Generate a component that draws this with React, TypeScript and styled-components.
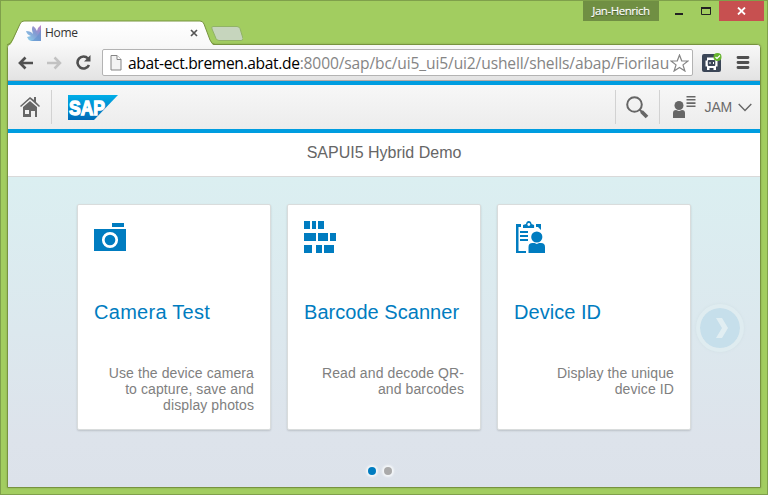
import React from "react";
import styled, { createGlobalStyle } from "styled-components";

const Global = createGlobalStyle`
  * { box-sizing: border-box; }
  html, body { margin: 0; padding: 0; overflow: hidden; }
  svg { display: block; flex: none; }
`;

const Window = styled.div`
  width: 768px;
  height: 495px;
  display: flex;
  flex-direction: column;
  background: #a2cd60;
  border: 1px solid #7fa04b;
  padding: 0 6px 6px 6px;
  font-family: "Liberation Sans", Arial, sans-serif;
`;

const Caption = styled.div`
  height: 19px;
  flex: none;
  display: flex;
  justify-content: flex-end;
  margin-right: -3px;
`;

const Profile = styled.div`
  width: 76px;
  height: 20px;
  background: #708f43;
  color: #fff;
  font: 11.5px/20px "Open Sans", sans-serif;
  letter-spacing: -0.45px;
  text-align: center;
  text-shadow: 0 1px 1px #3f5225, 0 0 1px #dde8cc;
`;

const CaptionButton = styled.div<{ $width: number; $inset?: number; $danger?: boolean }>`
  width: ${(p) => p.$width}px;
  height: 20px;
  padding-right: ${(p) => p.$inset ?? 0}px;
  display: flex;
  align-items: center;
  justify-content: center;
  background: ${(p) => (p.$danger ? "#c75050" : "transparent")};
`;

const TabStrip = styled.div`
  height: 24px;
  flex: none;
  display: flex;
  align-items: flex-start;
  position: relative;
  z-index: 1;
`;

const Tab = styled.div`
  position: relative;
  width: 208px;
  height: 26px;
  display: flex;
  align-items: center;
  padding: 0 17px 0 19px;
`;

const TabShape = styled.svg`
  position: absolute;
  left: 0;
  top: 0;
`;

const TabTitle = styled.span`
  position: relative;
  flex: 1;
  margin-left: 4px;
  color: #333;
  font: 12px/18px "Open Sans", sans-serif;
  letter-spacing: -0.3px;
`;

const Raised = styled.div`
  position: relative;
`;

const NewTab = styled.div`
  width: 30px;
  height: 15px;
  margin: 6px 0 0 -4px;
`;

const Browser = styled.div`
  flex: 1;
  min-height: 0;
  display: flex;
  flex-direction: column;
  border: 1px solid #77933f;
  border-radius: 4px 4px 0 0;
  background: #fff;
  overflow: hidden;
  box-shadow: 0 0 2px #819f4d;
`;

const Toolbar = styled.div`
  height: 36px;
  flex: none;
  display: flex;
  align-items: center;
  padding: 0 9px 0 10px;
  background: linear-gradient(#f8f8f8, #e3e3e3);
  border-bottom: 1px solid #b3aca8;
`;

const NavButton = styled.div<{ $gap: number }>`
  margin-right: ${(p) => p.$gap}px;
`;

const AddressBar = styled.div`
  width: 591px;
  height: 27px;
  display: flex;
  align-items: center;
  padding: 0 3px 0 7px;
  background: #fff;
  border: 1px solid #b3b3b3;
  border-radius: 2px;
`;

const Url = styled.div`
  flex: 1;
  min-width: 0;
  margin-left: 6px;
  white-space: nowrap;
  color: #858585;
  font: 15.6px/24px "Open Sans", sans-serif;
  letter-spacing: -0.14px;
`;

const Host = styled.span`
  color: #000;
  letter-spacing: -0.35px;
`;

const Extension = styled.div`
  margin: 0 14px 0 9px;
`;

const ShellHeader = styled.header`
  height: 52px;
  flex: none;
  display: flex;
  align-items: center;
  padding: 0 8px 0 12px;
  background: linear-gradient(#f7f7f7, #ececec);
  border-top: 4px solid #009de0;
  border-bottom: 4px solid #009de0;
`;

const Divider = styled.div<{ $left: number; $right: number }>`
  width: 1px;
  height: 34px;
  background: #d2d2d2;
  margin: 0 ${(p) => p.$right}px 0 ${(p) => p.$left}px;
`;

const Spacer = styled.div`
  flex: 1;
`;

const UserName = styled.span`
  margin: 0 6px 0 9px;
  color: #6b6b6b;
  font-size: 14px;
  line-height: 16px;
  letter-spacing: -0.2px;
`;

const TitleBar = styled.h1`
  height: 44px;
  flex: none;
  margin: 0;
  background: #fff;
  border-bottom: 1px solid #d9d9d9;
  color: #666;
  font-size: 16px;
  font-weight: normal;
  line-height: 40px;
  text-align: center;
`;

const Launchpad = styled.main`
  position: relative;
  flex: 1;
  display: flex;
  flex-direction: column;
  align-items: center;
  padding-top: 27px;
  background: linear-gradient(#dbeff1 0%, #dce8ee 50%, #dde3eb 85%, #dce2ea 100%);
`;

const Tiles = styled.div`
  display: flex;
  gap: 16px;
`;

const TileCard = styled.article`
  width: 194px;
  height: 226px;
  display: flex;
  flex-direction: column;
  padding: 16px;
  background: #fff;
  border: 1px solid #d9dcdc;
  border-radius: 2px;
  box-shadow: 0 1px 2px rgba(0, 0, 0, 0.15);
`;

const TileTitle = styled.h2<{ $tracking: number }>`
  margin: 47px 0 0;
  color: #007cc0;
  font-size: 20px;
  font-weight: normal;
  line-height: 24px;
  letter-spacing: ${(p) => p.$tracking}px;
  white-space: nowrap;
`;

const TileText = styled.p`
  margin: 41px 0 0;
  align-self: flex-end;
  width: 155px;
  color: #808080;
  font-size: 14px;
  line-height: 16px;
  letter-spacing: 0.1px;
  text-align: right;
  white-space: pre-line;
`;

const Pager = styled.div`
  display: flex;
  gap: 8px;
  margin: 37px 8px 0 0;
`;

const Dot = styled.div<{ $active?: boolean }>`
  width: 8px;
  height: 8px;
  border-radius: 50%;
  background: ${(p) => (p.$active ? "#007cc0" : "#aaa")};
  box-shadow: 0 0 2px 2px #f4f7f9;
`;

const NextPage = styled.button`
  position: absolute;
  right: 16px;
  top: 127px;
  width: 48px;
  height: 48px;
  padding: 0 0 0 4px;
  display: flex;
  align-items: center;
  justify-content: center;
  border: 4px solid #dfecf0;
  border-radius: 50%;
  background: #c6dfeb;
  background-clip: padding-box;
  box-shadow: 0 0 3px #d1dfe5;
`;

const CameraIcon = () => (
  <svg width="32" height="32" fill="#007cc0">
    <path d="M18 2h12v4H18zM0 8h32v22H0z" />
    <circle cx="16" cy="19" r="6.7" fill="none" stroke="#fff" strokeWidth="2.7" />
  </svg>
);

const BarcodeIcon = () => (
  <svg width="33" height="32" fill="#007cc0">
    <path d="M0 0h6v8H0zM8 0h4v8H8zM14 0h6v8h-6zM0 12h12v8H0zM14 12h10v8H14zM26 12h6v8h-6zM0 24h8v8H0zM12 24h6v8h-6zM20 24h10v8H20z" />
  </svg>
);

const DeviceIcon = () => (
  <svg width="32" height="32" fill="#007cc0">
    <path d="M2 3h5v3H4.500v24H12v2H2zM22 3h5v6l-3-3h-2z" />
    <path d="M9 7V4l3-1q.5-3 2.800-3t2.800 3l2.500 1v3z" />
    <circle cx="14.800" cy="3.500" r="1.400" fill="#fff" />
    <path d="M6 10h8v2H6zM6 14h8v2H6zM6 18h8v2H6z" />
    <circle cx="22.800" cy="16" r="5.600" />
    <path d="M14.500 32v-6q0-4 4-4h2l2.300 1 2.300-1h1.900q4 0 4 4v6z" />
  </svg>
);

const tiles = [
  { title: "Camera Test", tracking: 0.28, text: "Use the device camera\nto capture, save and\ndisplay photos", icon: <CameraIcon /> },
  { title: "Barcode Scanner", tracking: 0.04, text: "Read and decode QR-\nand barcodes", icon: <BarcodeIcon /> },
  { title: "Device ID", tracking: 0.04, text: "Display the unique\ndevice ID", icon: <DeviceIcon /> },
];

const TitleBarArea = () => (
  <Caption>
    <Profile>Jan-Henrich</Profile>
    <CaptionButton $width={40}>
      <svg width="8" height="10"><path d="M0 7h8v2H0z" fill="#222" /></svg>
    </CaptionButton>
    <CaptionButton $width={20} $inset={6}>
      <svg width="10" height="10"><path d="M.5 1.500h9v7h-9z" fill="none" stroke="#222" /><path d="M0 1h10v2H0z" fill="#222" /></svg>
    </CaptionButton>
    <CaptionButton $width={45} $danger>
      <svg width="9" height="8"><path d="M1 .5l7 7M8 .5l-7 7" stroke="#fff" strokeWidth="1.800" /></svg>
    </CaptionButton>
  </Caption>
);

const Tabs = () => (
  <TabStrip>
    <Tab>
      <TabShape width="210" height="26">
        <defs>
          <linearGradient id="tab" x1="0" y1="0" x2="0" y2="1">
            <stop offset="0" stopColor="#fff" />
            <stop offset="1" stopColor="#f8f8f8" />
          </linearGradient>
        </defs>
        <path d="M1 26q3-1 5-6L13 4q1-3 4-3h176q3 0 4 3l6 16q2 5 4 5v1z" fill="url(#tab)" />
        <path d="M0 25q4-1 6-6L13 4q1-3 4-3h176q3 0 4 3l6 16q2 4.500 5 4.500" fill="none" stroke="#77933f" />
      </TabShape>
      <Raised>
        <svg width="15" height="16">
          <defs>
            <linearGradient id="petals" x1="0" x2="1" y1="1" y2="0">
              <stop offset="0" stopColor="#8fd6ee" />
              <stop offset=".55" stopColor="#829bd2" />
              <stop offset="1" stopColor="#c47fc6" />
            </linearGradient>
          </defs>
          <path d="M0 6q5 0 7 3Q5 3 7 1q3 2 4 5 1-4 4-6v16H5Q2 15 1 12l4-1Q1 10 0 6z" fill="url(#petals)" />
          <path d="M5 16q6-2 10-12v12z" fill="#6292ce" opacity=".6" />
        </svg>
      </Raised>
      <TabTitle>Home</TabTitle>
      <Raised>
        <svg width="8" height="8"><path d="M1 1l6 6M7 1L1 7" stroke="#555" strokeWidth="1.700" /></svg>
      </Raised>
    </Tab>
    <NewTab>
      <svg width="32" height="16">
        <path d="M2 .5h24q2 0 3 2l3 10q0 2-2 2H8q-2 0-3-2L1 3Q0 .5 2 .5z" fill="#c6d5bd" stroke="#91b366" />
      </svg>
    </NewTab>
  </TabStrip>
);

const BrowserToolbar = () => (
  <Toolbar>
    <NavButton $gap={14}>
      <svg width="15" height="14"><path d="M7.500 1.500L2 7l5.500 5.500M2 7h13" fill="none" stroke="#505050" strokeWidth="2.700" /></svg>
    </NavButton>
    <NavButton $gap={14}>
      <svg width="15" height="14"><path d="M7.500 1.500L13 7l-5.500 5.500M13 7H0" fill="none" stroke="#c2c2c2" strokeWidth="2.500" /></svg>
    </NavButton>
    <NavButton $gap={11}>
      <svg width="15" height="15">
        <path d="M12 3.500A6 6 0 1 0 13 10" fill="none" stroke="#505050" strokeWidth="2.600" />
        <path d="M14.500 0v6.500H8z" fill="#505050" />
      </svg>
    </NavButton>
    <AddressBar>
      <svg width="12" height="16">
        <path d="M1 .5h6l4 4v10.500H1z" fill="#f3f3f3" stroke="#858585" />
        <path d="M7 .5v4h4" fill="#fff" stroke="#858585" />
      </svg>
      <Url><Host>abat-ect.bremen.abat.de</Host>:8000/sap/bc/ui5_ui5/ui2/ushell/shells/abap/Fiorilau</Url>
      <svg width="19" height="18">
        <path d="M9.500 1l2.200 5.800 6.300.2-5 3.900 1.900 6.100-5.400-3.600L4.100 17 6 10.900 1 7l6.300-.2z" fill="#fff" stroke="#858585" strokeWidth="1.200" />
      </svg>
    </AddressBar>
    <Extension>
      <svg width="20" height="20">
        <rect y="1" width="19" height="18" rx="2" fill="#3b4657" />
        <path d="M5 4.500h9v3h1.500v6H14V17h-2.500v-2h-4v2H5v-3.500H3.500v-6H5z" fill="#fff" />
        <rect x="5.800" y="7" width="7.500" height="6" rx="1" fill="#3b4657" />
        <path d="M7.500 9h1v2h-1zM11 9h1v2h-1z" fill="#fff" />
        <circle cx="15.500" cy="4" r="4" fill="#66b52c" />
        <path d="M13.500 4l1.500 1.500 3-3" fill="none" stroke="#fff" strokeWidth="1.200" />
      </svg>
    </Extension>
    <svg width="14" height="13"><path d="M2 1.500h10M2 6.500h10M2 11.500h10" stroke="#505050" strokeWidth="2.800" strokeLinecap="round" /></svg>
  </Toolbar>
);

const Shell = () => (
  <ShellHeader>
    <svg width="20" height="20" fill="#666">
      <path d="M10 0L0 9l1 1 9-8 9 8 1-1-4-4V0h-2v3z" />
      <path fillRule="evenodd" d="M10 4L3 10v10h8v-6h4v6h2V10zM5 13h4v4H5z" />
    </svg>
    <Divider $left={11} $right={16} />
    <svg width="50" height="25">
      <defs>
        <linearGradient id="sap" x1="0" y1="0" x2="0" y2="1">
          <stop offset="0" stopColor="#00aee8" />
          <stop offset="1" stopColor="#006bb7" />
        </linearGradient>
      </defs>
      <path d="M0 0h50L26 25H0z" fill="url(#sap)" />
      <text x="1" y="19.500" fill="#fff" stroke="#fff" strokeWidth="1.300" fontFamily="Liberation Sans, Arial, sans-serif" fontWeight="700" fontSize="20" textLength="36" lengthAdjust="spacingAndGlyphs">SAP</text>
    </svg>
    <Spacer />
    <Divider $left={0} $right={10} />
    <svg width="23" height="23" fill="none" stroke="#666">
      <circle cx="8.500" cy="8.500" r="7.300" strokeWidth="2" />
      <path d="M13.500 13.500l3 3" strokeWidth="2" />
      <path d="M15.500 15.500l5.500 5.500" strokeWidth="3.800" />
    </svg>
    <Divider $left={10} $right={13} />
    <svg width="23" height="24" fill="#666">
      <circle cx="6" cy="10.500" r="4.500" />
      <path d="M0 23v-5q0-3 3-3l3 1 3-1q3 0 3 3v5zM13.500 1h9v1.600h-9zM13.500 4h9v1.600h-9zM13.500 7.300h9v1.600h-9zM13.500 10.500h9v1.600h-9z" />
    </svg>
    <UserName>JAM</UserName>
    <svg width="14" height="9"><path d="M.7 1L7 7.500 13.300 1" fill="none" stroke="#666" strokeWidth="1.400" /></svg>
  </ShellHeader>
);

export default function App() {
  return (
    <>
      <Global />
      <Window>
        <TitleBarArea />
        <Tabs />
        <Browser>
          <BrowserToolbar />
          <Shell />
          <TitleBar>SAPUI5 Hybrid Demo</TitleBar>
          <Launchpad>
            <Tiles>
              {tiles.map((tile) => (
                <TileCard key={tile.title}>
                  {tile.icon}
                  <TileTitle $tracking={tile.tracking}>{tile.title}</TileTitle>
                  <TileText>{tile.text}</TileText>
                </TileCard>
              ))}
            </Tiles>
            <Pager>
              <Dot $active />
              <Dot />
            </Pager>
            <NextPage aria-label="Next page">
              <svg width="14" height="22"><path d="M1 1h6l6 10-6 10H1l6-10z" fill="#e1eef2" /></svg>
            </NextPage>
          </Launchpad>
        </Browser>
      </Window>
    </>
  );
}
